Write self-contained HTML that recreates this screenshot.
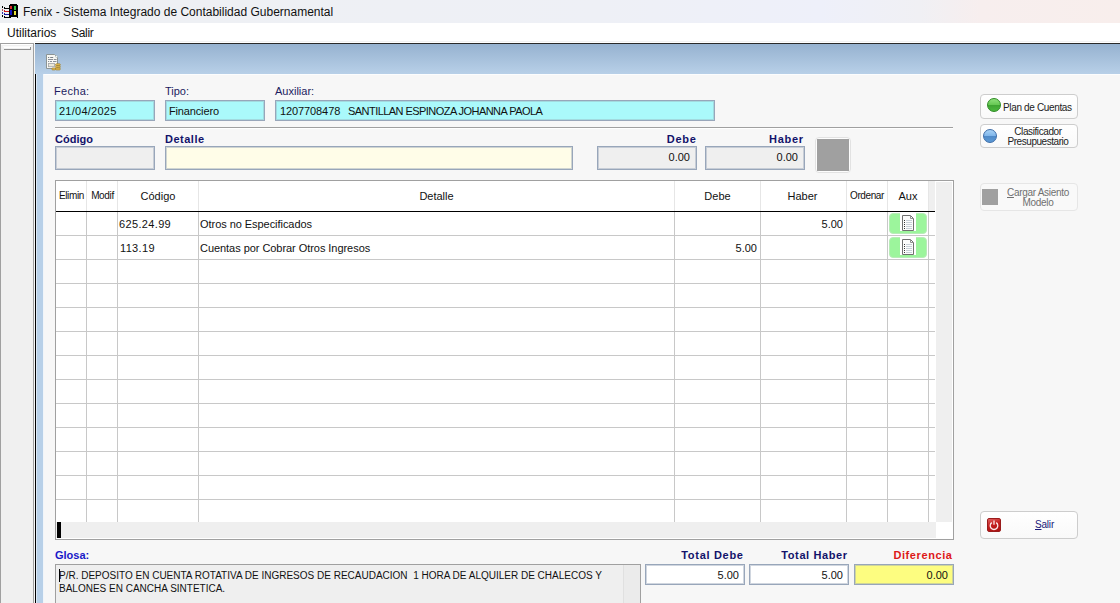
<!DOCTYPE html>
<html><head><meta charset="utf-8">
<style>
*{margin:0;padding:0;box-sizing:border-box}
html,body{width:1120px;height:603px;overflow:hidden;background:#f7f7f7;font-family:"Liberation Sans",sans-serif;font-size:12px;color:#000}
.a{position:absolute}
.t{position:absolute;white-space:pre;line-height:1}
.inp{position:absolute;border:1px solid #98a6ba;box-shadow:inset 0 0 0 1px #c2ccd6}
.btn{position:absolute;border:1px solid #cdcdcd;border-radius:4px;background:linear-gradient(#ffffff,#f9f9f9)}
</style></head><body>
<div class="a" style="left:0px;top:0px;width:1120px;height:23px;background:linear-gradient(90deg,#eef0f3 0px,#eef0f6 600px,#eef0fa 820px,#f0f0f4 920px,#f7eeee 980px,#f8eeec 1120px);"></div>
<svg class="a" style="left:0;top:0" width="22" height="20" viewBox="0 0 22 20" shape-rendering="crispEdges">
<path d="M9 5h1v-1h7v1h1v13h-1v-1h-6v1h-2z" fill="#000"/>
<rect x="10" y="6" width="2" height="3" fill="#d82828"/>
<rect x="14" y="6" width="2" height="4" fill="#30c848"/>
<rect x="10" y="10" width="2" height="5" fill="#1414c8"/>
<rect x="14" y="11" width="2" height="4" fill="#e8e038"/>
<rect x="2" y="6" width="1" height="2" fill="#000"/>
<rect x="2" y="9" width="1" height="2" fill="#a85050"/>
<rect x="2" y="12" width="1" height="2" fill="#3838a8"/>
<rect x="2" y="15" width="1" height="2" fill="#000"/>
<path d="M4 7h1v1h4v1h-5z" fill="#000"/>
<path d="M4 10h1v1h4v1h-5z" fill="#d01818"/>
<path d="M4 13h1v1h4v1h-5z" fill="#1818a0"/>
<path d="M4 16h1v1h4v1h-5z" fill="#000"/>
</svg>
<div class="t" style="left:23px;top:6px;font-size:12px;color:#111;">Fenix - Sistema Integrado de Contabilidad Gubernamental</div>
<div class="a" style="left:0px;top:23px;width:1120px;height:20px;background:#ffffff;"></div>
<div class="a" style="left:35px;top:41px;width:1085px;height:1px;background:#f2f2f2;"></div>
<div class="t" style="left:7px;top:27px;font-size:12px;color:#111;">Utilitarios</div>
<div class="t" style="left:71px;top:27px;font-size:12px;color:#111;letter-spacing:-0.3px">Salir</div>
<div class="a" style="left:0px;top:43px;width:34px;height:560px;background:#f0f0f0;border-left:1px solid #a0a0a0;border-right:1px solid #a0a0a0;border-top:1px solid #a0a0a0"></div>
<div class="a" style="left:1px;top:44px;width:32px;height:1px;background:#ffffff;"></div>
<div class="a" style="left:3px;top:46px;width:28px;height:1px;background:#fafafa;"></div>
<div class="a" style="left:4px;top:47px;width:26px;height:1px;background:#ffffff;"></div>
<div class="a" style="left:4px;top:49px;width:27px;height:1px;background:#909090;"></div>
<div class="a" style="left:30px;top:47px;width:1px;height:3px;background:#909090;"></div>
<div class="a" style="left:35px;top:43px;width:1085px;height:1px;background:#2a2a2a;"></div>
<div class="a" style="left:35px;top:44px;width:1085px;height:559px;background:linear-gradient(#96b2d0,#b8d0e8 30px,#b8d0e8);"></div>
<div class="a" style="left:35px;top:74px;width:1px;height:529px;background:#000;"></div>
<div class="a" style="left:43px;top:74px;width:1077px;height:529px;background:#f7f7f7;"></div>
<div class="a" style="left:36px;top:74px;width:1px;height:529px;background:#dce8f4;"></div>
<div class="a" style="left:43px;top:74px;width:1077px;height:1px;background:#fcfdfe;"></div>
<div class="a" style="left:43px;top:74px;width:1px;height:529px;background:#f0f5fa;"></div>
<svg class="a" style="left:42px;top:50px" width="24" height="24" viewBox="0 0 24 24">
<path d="M4.5 4.5h8l3 3v11h-11z" fill="#f8f8f4" stroke="#8c9494"/>
<circle cx="14.4" cy="6.4" r="1" fill="#fff" stroke="#9aa" stroke-width=".6"/>
<path d="M6 7.5h1.2M8.2 7.5h3" stroke="#7a8088" stroke-width="1"/>
<path d="M6 9.5h5M11.8 9.5h2.8" stroke="#8a9098" stroke-width="1"/>
<path d="M6 11.5h1.2M8 11.5h2M11 11.5h3.5" stroke="#8a9098" stroke-width="1"/>
<rect x="6.5" y="13.5" width="6" height="3.2" fill="#ece8d8" stroke="#a0a4a8" stroke-width=".8"/>
<rect x="13.5" y="13.8" width="4.8" height="1.9" rx=".9" fill="#ecc458" stroke="#9a7a28" stroke-width=".7"/>
<rect x="13.5" y="15.9" width="4.8" height="1.9" rx=".9" fill="#ecc458" stroke="#9a7a28" stroke-width=".7"/>
<rect x="13.5" y="18" width="4.8" height="1.9" rx=".9" fill="#ecc458" stroke="#9a7a28" stroke-width=".7"/>
<rect x="9.8" y="18" width="3.8" height="1.9" rx=".9" fill="#ecc458" stroke="#9a7a28" stroke-width=".7"/>
</svg>
<div class="t" style="left:54px;top:86px;font-size:11px;color:#1c1c60;letter-spacing:0.3px">Fecha:</div>
<div class="t" style="left:165px;top:86px;font-size:11px;color:#1c1c60;">Tipo:</div>
<div class="t" style="left:275px;top:86px;font-size:11px;color:#1c1c60;">Auxiliar:</div>
<div class="a" style="left:55px;top:100px;width:100px;height:21px;background:#aaf9fb;border:1px solid #98a6ba;box-shadow:inset 0 0 0 1px rgba(150,160,172,.35)"></div>
<div class="a" style="left:165px;top:100px;width:100px;height:21px;background:#aaf9fb;border:1px solid #98a6ba;box-shadow:inset 0 0 0 1px rgba(150,160,172,.35)"></div>
<div class="a" style="left:275px;top:100px;width:440px;height:21px;background:#aaf9fb;border:1px solid #98a6ba;box-shadow:inset 0 0 0 1px rgba(150,160,172,.35)"></div>
<div class="t" style="left:59px;top:106px;font-size:11px;color:#111;letter-spacing:0.25px">21/04/2025</div>
<div class="t" style="left:169px;top:106px;font-size:11px;color:#111;letter-spacing:-0.15px">Financiero</div>
<div class="t" style="left:280px;top:106px;font-size:11px;color:#111;letter-spacing:-0.1px">1207708478</div>
<div class="t" style="left:348px;top:106px;font-size:11px;color:#111;letter-spacing:-0.55px">SANTILLAN ESPINOZA JOHANNA PAOLA</div>
<div class="a" style="left:55px;top:127px;width:898px;height:1px;background:#a0a0a0;"></div>
<div class="a" style="left:55px;top:128px;width:898px;height:1px;background:#ffffff;"></div>
<div class="t" style="left:55px;top:134px;font-size:11px;color:#12126a;font-weight:bold">Código</div>
<div class="t" style="left:165px;top:134px;font-size:11px;color:#12126a;font-weight:bold;letter-spacing:0.5px">Detalle</div>
<div class="t" style="left:597px;top:134px;font-size:11px;color:#12126a;font-weight:bold;width:99.8px;text-align:right;letter-spacing:0.8px">Debe</div>
<div class="t" style="left:705px;top:134px;font-size:11px;color:#12126a;font-weight:bold;width:98.7px;text-align:right;letter-spacing:0.7px">Haber</div>
<div class="a" style="left:55px;top:146px;width:100px;height:24px;background:#efefef;border:1px solid #98a6ba;box-shadow:inset 0 0 0 1px rgba(150,165,185,.45)"></div>
<div class="a" style="left:165px;top:146px;width:408px;height:24px;background:#fffde8;border:1px solid #98a6ba;box-shadow:inset 0 0 0 1px rgba(150,165,185,.45)"></div>
<div class="a" style="left:597px;top:146px;width:100px;height:24px;background:#efefef;border:1px solid #98a6ba;box-shadow:inset 0 0 0 1px rgba(150,165,185,.45)"></div>
<div class="a" style="left:705px;top:146px;width:100px;height:24px;background:#efefef;border:1px solid #98a6ba;box-shadow:inset 0 0 0 1px rgba(150,165,185,.45)"></div>
<div class="t" style="left:597px;top:152px;font-size:11px;color:#111;width:93px;text-align:right">0.00</div>
<div class="t" style="left:705px;top:152px;font-size:11px;color:#111;width:93px;text-align:right">0.00</div>
<div class="a" style="left:815px;top:137px;width:36px;height:36px;background:#fdfdfd;border:1px solid #e2e2e2;border-radius:4px"></div>
<div class="a" style="left:817px;top:139px;width:32px;height:32px;background:#a0a0a0;"></div>
<div class="btn" style="left:980px;top:94px;width:98px;height:25px"></div>
<div class="a" style="left:987px;top:98px;width:14px;height:14px;background:linear-gradient(#8ee07a 0%,#66c854 48%,#3fa432 52%,#4cb83e 100%);border-radius:50%;border:1px solid #2c8a22"></div>
<div class="t" style="left:1003px;top:103px;font-size:10px;color:#222;letter-spacing:-0.35px">Plan de Cuentas</div>
<div class="btn" style="left:980px;top:124px;width:98px;height:24px"></div>
<div class="a" style="left:983px;top:129px;width:14px;height:14px;background:linear-gradient(#a8d2f6 0%,#80b6ea 48%,#4f8ac8 52%,#5c9ad6 100%);border-radius:50%;border:1px solid #3c6ca8"></div>
<div class="t" style="left:998px;top:127px;font-size:10px;color:#222;width:80px;text-align:center;letter-spacing:-0.4px">Clasificador</div>
<div class="t" style="left:998px;top:137px;font-size:10px;color:#222;width:80px;text-align:center;letter-spacing:-0.45px">Presupuestario</div>
<div class="btn" style="left:980px;top:183px;width:98px;height:28px;border-color:#e6e6e6;background:#f9f9f9"></div>
<div class="a" style="left:982px;top:189px;width:16px;height:16px;background:#a0a0a0;"></div>
<div class="t" style="left:998px;top:188px;font-size:10px;color:#707070;width:80px;text-align:center;letter-spacing:-0.3px"><u>C</u>argar Asiento</div>
<div class="t" style="left:998px;top:198px;font-size:10px;color:#707070;width:80px;text-align:center;letter-spacing:-0.3px">Modelo</div>
<div class="btn" style="left:980px;top:511px;width:98px;height:28px"></div>
<div class="a" style="left:987px;top:518px;width:14px;height:14px;background:linear-gradient(160deg,#e06060,#c42020 45%,#a81010);border-radius:2px;border:1px solid #9a1c1c"></div>
<svg class="a" style="left:987px;top:518px" width="14" height="14" viewBox="0 0 14 14"><path d="M4.8 4.6A3.8 3.8 0 1 0 9.2 4.6" fill="none" stroke="#fbeaea" stroke-width="1.3"/><path d="M7 2.6v4.2" stroke="#fbeaea" stroke-width="1.3"/></svg>
<div class="t" style="left:1035px;top:520px;font-size:10px;color:#1a1a7a;letter-spacing:-0.2px"><u>S</u>alir</div>
<div class="a" style="left:55px;top:180px;width:899px;height:360px;background:#fff;border:1px solid #a0a0a0"></div>
<div class="a" style="left:86px;top:181px;width:1px;height:30px;background:#e6e6e6;"></div>
<div class="a" style="left:117px;top:181px;width:1px;height:30px;background:#e6e6e6;"></div>
<div class="a" style="left:198px;top:181px;width:1px;height:30px;background:#e6e6e6;"></div>
<div class="a" style="left:674px;top:181px;width:1px;height:30px;background:#e6e6e6;"></div>
<div class="a" style="left:760px;top:181px;width:1px;height:30px;background:#e6e6e6;"></div>
<div class="a" style="left:846px;top:181px;width:1px;height:30px;background:#e6e6e6;"></div>
<div class="a" style="left:887px;top:181px;width:1px;height:30px;background:#e6e6e6;"></div>
<div class="a" style="left:928px;top:181px;width:1px;height:30px;background:#e6e6e6;"></div>
<div class="a" style="left:929px;top:181px;width:6px;height:30px;background:#efefef;"></div>
<div class="a" style="left:56px;top:211px;width:879px;height:1px;background:#000;"></div>
<div class="a" style="left:56px;top:235px;width:879px;height:1px;background:#c8c8c8;"></div>
<div class="a" style="left:56px;top:259px;width:879px;height:1px;background:#c8c8c8;"></div>
<div class="a" style="left:56px;top:283px;width:879px;height:1px;background:#c8c8c8;"></div>
<div class="a" style="left:56px;top:307px;width:879px;height:1px;background:#c8c8c8;"></div>
<div class="a" style="left:56px;top:331px;width:879px;height:1px;background:#c8c8c8;"></div>
<div class="a" style="left:56px;top:355px;width:879px;height:1px;background:#c8c8c8;"></div>
<div class="a" style="left:56px;top:379px;width:879px;height:1px;background:#c8c8c8;"></div>
<div class="a" style="left:56px;top:403px;width:879px;height:1px;background:#c8c8c8;"></div>
<div class="a" style="left:56px;top:427px;width:879px;height:1px;background:#c8c8c8;"></div>
<div class="a" style="left:56px;top:451px;width:879px;height:1px;background:#c8c8c8;"></div>
<div class="a" style="left:56px;top:475px;width:879px;height:1px;background:#c8c8c8;"></div>
<div class="a" style="left:56px;top:499px;width:879px;height:1px;background:#c8c8c8;"></div>
<div class="a" style="left:86px;top:212px;width:1px;height:310px;background:#c8c8c8;"></div>
<div class="a" style="left:117px;top:212px;width:1px;height:310px;background:#c8c8c8;"></div>
<div class="a" style="left:198px;top:212px;width:1px;height:310px;background:#c8c8c8;"></div>
<div class="a" style="left:674px;top:212px;width:1px;height:310px;background:#c8c8c8;"></div>
<div class="a" style="left:760px;top:212px;width:1px;height:310px;background:#c8c8c8;"></div>
<div class="a" style="left:846px;top:212px;width:1px;height:310px;background:#c8c8c8;"></div>
<div class="a" style="left:887px;top:212px;width:1px;height:310px;background:#c8c8c8;"></div>
<div class="a" style="left:928px;top:212px;width:1px;height:310px;background:#c8c8c8;"></div>
<div class="a" style="left:936px;top:182px;width:16px;height:340px;background:#efefef;"></div>
<div class="a" style="left:56px;top:522px;width:880px;height:16px;background:#efefef;"></div>
<div class="a" style="left:57px;top:522px;width:4px;height:16px;background:#000;"></div>
<div class="t" style="left:57px;top:191px;font-size:10px;color:#111;width:29px;text-align:center;letter-spacing:-0.35px">Elimin</div>
<div class="t" style="left:88px;top:191px;font-size:10px;color:#111;width:29px;text-align:center;letter-spacing:-0.35px">Modif</div>
<div class="t" style="left:118px;top:191px;font-size:11px;color:#111;width:80px;text-align:center;letter-spacing:0px">Código</div>
<div class="t" style="left:199px;top:191px;font-size:11px;color:#111;width:475px;text-align:center;letter-spacing:0px">Detalle</div>
<div class="t" style="left:675px;top:191px;font-size:11px;color:#111;width:85px;text-align:center;letter-spacing:0px">Debe</div>
<div class="t" style="left:760px;top:191px;font-size:11px;color:#111;width:85px;text-align:center;letter-spacing:0px">Haber</div>
<div class="t" style="left:847px;top:191px;font-size:10px;color:#111;width:40px;text-align:center;letter-spacing:-0.4px">Ordenar</div>
<div class="t" style="left:888px;top:191px;font-size:11px;color:#111;width:40px;text-align:center;letter-spacing:0px">Aux</div>
<div class="t" style="left:119px;top:219px;font-size:11px;color:#111;letter-spacing:0.35px">625.24.99</div>
<div class="t" style="left:200px;top:219px;font-size:11px;color:#111;letter-spacing:-0.05px">Otros no Especificados</div>
<div class="t" style="left:761px;top:219px;font-size:11px;color:#111;width:82px;text-align:right">5.00</div>
<div class="a" style="left:889px;top:213px;width:38px;height:21px;background:#9cf59c;border-radius:4px;border:1px solid #b8ecb8"></div>
<svg class="a" style="left:900px;top:213px" width="16" height="18" viewBox="0 0 16 18">
<rect x="0" y="0" width="16" height="18" fill="#fff"/>
<path d="M2.5 2.5h8l3 3v12h-11z" fill="#fcfcfc" stroke="#707070"/>
<path d="M10.5 2.5v3h3" fill="none" stroke="#909090"/>
<path d="M4 7.5h1M4 9.5h1M4 11.5h1M4 13.5h1M4 15.5h1" stroke="#383838"/>
<path d="M6 7.5h6M6 9.5h6M6 11.5h6M6 13.5h6M6 15.5h6" stroke="#c8d0d8"/>
</svg>
<div class="t" style="left:120px;top:243px;font-size:11px;color:#111;letter-spacing:0.35px">113.19</div>
<div class="t" style="left:200px;top:243px;font-size:11px;color:#111;letter-spacing:-0.05px">Cuentas por Cobrar Otros Ingresos</div>
<div class="t" style="left:675px;top:243px;font-size:11px;color:#111;width:82px;text-align:right">5.00</div>
<div class="a" style="left:889px;top:237px;width:38px;height:21px;background:#9cf59c;border-radius:4px;border:1px solid #b8ecb8"></div>
<svg class="a" style="left:900px;top:237px" width="16" height="18" viewBox="0 0 16 18">
<rect x="0" y="0" width="16" height="18" fill="#fff"/>
<path d="M2.5 2.5h8l3 3v12h-11z" fill="#fcfcfc" stroke="#707070"/>
<path d="M10.5 2.5v3h3" fill="none" stroke="#909090"/>
<path d="M4 7.5h1M4 9.5h1M4 11.5h1M4 13.5h1M4 15.5h1" stroke="#383838"/>
<path d="M6 7.5h6M6 9.5h6M6 11.5h6M6 13.5h6M6 15.5h6" stroke="#c8d0d8"/>
</svg>
<div class="t" style="left:55px;top:550px;font-size:11px;color:#1818c8;font-weight:bold">Glosa:</div>
<div class="a" style="left:55px;top:564px;width:586px;height:45px;background:#efefef;border:1px solid #a0a0a0"></div>
<div class="a" style="left:623px;top:565px;width:17px;height:40px;background:#ebebeb;border-left:1px solid #e0e0e0"></div>
<div class="t" style="left:59px;top:570px;font-size:10px;color:#111;line-height:12.5px">P/R. DEPOSITO EN CUENTA ROTATIVA DE INGRESOS DE RECAUDACION  1 HORA DE ALQUILER DE CHALECOS Y
BALONES EN CANCHA SINTETICA.</div>
<div class="a" style="left:59px;top:569px;width:1px;height:13px;background:#000;"></div>
<div class="t" style="left:645px;top:550px;font-size:11px;color:#12126a;font-weight:bold;width:98.7px;text-align:right;letter-spacing:0.7px">Total Debe</div>
<div class="t" style="left:749px;top:550px;font-size:11px;color:#12126a;font-weight:bold;width:98.6px;text-align:right;letter-spacing:0.6px">Total Haber</div>
<div class="t" style="left:854px;top:550px;font-size:11px;color:#dd1818;font-weight:bold;width:98.6px;text-align:right;letter-spacing:0.6px">Diferencia</div>
<div class="a" style="left:645px;top:564px;width:100px;height:21px;background:#fff;border:1px solid #98a6ba;box-shadow:inset 0 0 0 1px rgba(150,165,185,.45)"></div>
<div class="a" style="left:749px;top:564px;width:100px;height:21px;background:#fff;border:1px solid #98a6ba;box-shadow:inset 0 0 0 1px rgba(150,165,185,.45)"></div>
<div class="a" style="left:854px;top:564px;width:100px;height:21px;background:#fdfd80;border:1px solid #98a6ba;box-shadow:inset 0 0 0 1px rgba(150,165,185,.45)"></div>
<div class="t" style="left:645px;top:570px;font-size:11px;color:#111;width:94px;text-align:right">5.00</div>
<div class="t" style="left:749px;top:570px;font-size:11px;color:#111;width:94px;text-align:right">5.00</div>
<div class="t" style="left:854px;top:570px;font-size:11px;color:#111;width:94px;text-align:right">0.00</div>
</body></html>
